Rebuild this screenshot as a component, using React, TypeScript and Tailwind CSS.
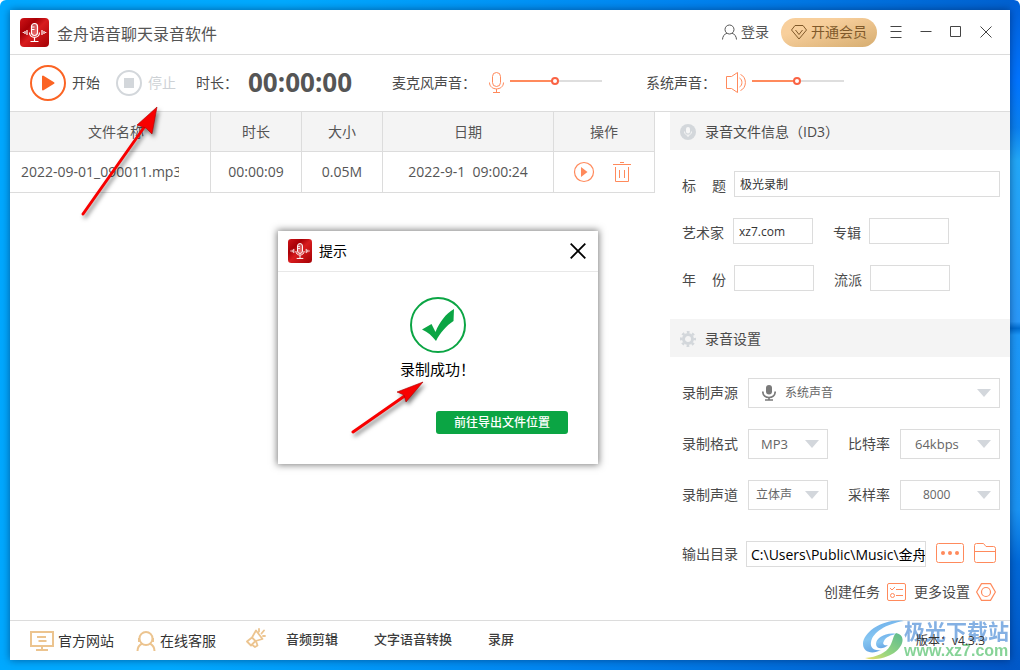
import React from "react";

type IconProps = { className?: string };

const AppLogo: React.FC<IconProps> = ({ className }) => (
  <svg className={className} viewBox="0 0 29 29" fill="none" aria-hidden="true">
    <defs>
      <linearGradient id="logo-red" x1="0" y1="0" x2="1" y2="1">
        <stop offset="0" stopColor="#d01418" />
        <stop offset="0.3" stopColor="#a80006" />
        <stop offset="0.5" stopColor="#d81c1e" />
        <stop offset="1" stopColor="#a40004" />
      </linearGradient>
    </defs>
    <rect width="29" height="29" rx="4" fill="url(#logo-red)" />
    <rect x="11.5" y="5.5" width="6" height="12" rx="3" fill="#fff" fillOpacity="0.3" stroke="#fff" strokeWidth="1.2" />
    <path d="M12 9h2.5M12 11.5h2.5" stroke="#fff" />
    <path
      d="M9.5 14.500c0 6.500 10 6.500 10 0M14.500 19.500v4M10.500 23.500h8M7 12v5M22 12v5M5 13v3M24 13v3M3.300 14v1M25.700 14v1"
      stroke="#fff"
      strokeWidth="1.200"
    />
  </svg>
);

const MicLine: React.FC<IconProps> = ({ className }) => (
  <svg className={className} viewBox="0 0 16 22" fill="none" stroke="#ff8a5c" aria-hidden="true">
    <rect x="3.500" y="0.500" width="8" height="14" rx="4" />
    <path d="M0.500 10.500c0 8.500 14 8.500 14 0M7.500 17v3M4 20.500h7" />
  </svg>
);

const MicSolid: React.FC<IconProps> = ({ className }) => (
  <svg className={className} viewBox="0 0 14 16" aria-hidden="true">
    <rect x="4" y="0" width="6" height="9.500" rx="3" fill="currentColor" />
    <path d="M0.800 6.500c0 8 12.400 8 12.400 0M7 12v3M3 15h8" fill="none" stroke="currentColor" strokeWidth="1.700" />
  </svg>
);

const CaretIcon: React.FC = () => (
  <svg className="pointer-events-none absolute right-[9px] top-[11px] h-2 w-[14px]" viewBox="0 0 14 8" aria-hidden="true">
    <path d="M0 0h14L7 8z" fill="#d3d7dc" />
  </svg>
);

const sliderClass =
  "h-[2px] w-[92px] appearance-none bg-[linear-gradient(to_right,#ff8a5c_49%,#dedede_49%)] outline-none [&::-webkit-slider-thumb]:h-2 [&::-webkit-slider-thumb]:w-2 [&::-webkit-slider-thumb]:appearance-none [&::-webkit-slider-thumb]:rounded-full [&::-webkit-slider-thumb]:border-2 [&::-webkit-slider-thumb]:border-[#fa6344] [&::-webkit-slider-thumb]:bg-white";

const fieldClass = "h-[26px] border border-[#dcdcdc] bg-white px-[5px] text-xs text-[#333] outline-none";

type SelectProps = {
  id: string;
  value: string;
  className: string;
  selectClass: string;
  icon?: React.ReactNode;
};

const SelectBox: React.FC<SelectProps> = ({ id, value, className, selectClass, icon }) => (
  <div className={`relative ${className}`}>
    {icon}
    <select
      id={id}
      className={`h-[30px] w-full appearance-none border border-[#dcdcdc] bg-white text-[#666] outline-none ${selectClass}`}
      defaultValue={value}
    >
      <option>{value}</option>
    </select>
    <CaretIcon />
  </div>
);

const TitleBar: React.FC = () => (
  <header className="flex h-[45px] shrink-0 items-center border-b border-[#dcdcdc] pl-[10px] pr-[9px]">
    <AppLogo className="h-[29px] w-[29px]" />
    <h1 className="ml-2 pt-[3px] text-base text-[#555]">金舟语音聊天录音软件</h1>
    <div className="ml-auto flex items-center">
      <button type="button" className="flex items-center gap-1 text-[#555]">
        <svg className="h-4 w-[15px]" viewBox="0 0 15 16" fill="none" stroke="currentColor" aria-hidden="true">
          <circle cx="7.500" cy="5.500" r="4.500" />
          <path d="M0.500 15.500c0-3 2.200-5.800 4.600-6.400M14.500 15.500c0-3-2.200-5.800-4.600-6.400" />
        </svg>
        登录
      </button>
      <button
        type="button"
        className="ml-3 flex h-[29px] w-24 items-center justify-center gap-1 rounded-full bg-linear-to-br from-[#f8cf9c] from-30% to-[#d6ad70] text-[#80592a]"
      >
        <svg className="h-4 w-4" viewBox="0 0 16 16" fill="none" stroke="currentColor" aria-hidden="true">
          <path d="M4 1.500h8l3.500 4.500L8 15 0.500 6z" />
          <path d="M4.500 6L8 10.500 11.500 6" />
        </svg>
        开通会员
      </button>
      <div className="ml-1 flex text-[#444]">
        <button type="button" aria-label="菜单" className="flex h-[30px] w-[30px] items-center justify-center">
          <svg className="h-3 w-3" viewBox="0 0 12 12" stroke="currentColor" aria-hidden="true">
            <path d="M0.500 0.500h11M0.500 5.500h11M0.500 11.500h11" />
          </svg>
        </button>
        <button type="button" aria-label="最小化" className="flex h-[30px] w-[30px] items-center justify-center">
          <svg className="h-3 w-3" viewBox="0 0 12 12" stroke="currentColor" aria-hidden="true">
            <path d="M0.500 5.500h11" />
          </svg>
        </button>
        <button type="button" aria-label="最大化" className="flex h-[30px] w-[30px] items-center justify-center">
          <svg className="h-3 w-3" viewBox="0 0 12 12" fill="none" stroke="currentColor" aria-hidden="true">
            <path d="M0.500 0.500h10v10h-10z" />
          </svg>
        </button>
        <button type="button" aria-label="关闭" className="flex h-[30px] w-[30px] items-center justify-center">
          <svg className="h-3 w-3" viewBox="0 0 12 12" stroke="currentColor" aria-hidden="true">
            <path d="M0.500 0.500l11 11M11.500 0.500l-11 11" />
          </svg>
        </button>
      </div>
    </div>
  </header>
);

const Toolbar: React.FC = () => (
  <div className="flex h-[57px] shrink-0 items-center border-b border-[#dcdcdc] pl-5 text-[#4a4a4a]">
    <button type="button" className="flex items-center gap-[6px]">
      <svg className="h-9 w-9" viewBox="0 0 36 36" aria-hidden="true">
        <circle cx="18" cy="18" r="17" fill="none" stroke="#fb6424" strokeWidth="2" />
        <path d="M13 11.500v13L23.500 18z" fill="#fb6424" stroke="#fb6424" strokeWidth="2" strokeLinejoin="round" />
      </svg>
      开始
    </button>
    <button type="button" disabled className="ml-4 flex items-center gap-[6px] text-[#cdd1d5]">
      <svg className="h-[26px] w-[26px]" viewBox="0 0 26 26" aria-hidden="true">
        <circle cx="13" cy="13" r="12" fill="none" stroke="#d3d7db" strokeWidth="2" />
        <path d="M8 8h10v10H8z" fill="#d3d7db" />
      </svg>
      停止
    </button>
    <span className="ml-5 w-[52px]">时长：</span>
    <output className="w-[104px] text-[26px] font-bold text-[#555]">00:00:00</output>
    <label htmlFor="mic-volume" className="ml-10 w-[97px]">
      麦克风声音：
    </label>
    <MicLine className="h-[22px] w-4" />
    <input id="mic-volume" type="range" defaultValue={49} className={`ml-[5px] -translate-y-0.5 ${sliderClass}`} />
    <label htmlFor="system-volume" className="ml-11 w-20">
      系统声音：
    </label>
    <svg className="h-[22px] w-5" viewBox="0 0 20 22" fill="none" stroke="#ff8a5c" aria-hidden="true">
      <path d="M0.500 4.500h5l6-4v20l-6-4h-5z" />
      <path d="M13.500 6c3.200 1.500 3.200 7.500 0 9M14.500 2.500c6.500 2.500 6.500 13.500 0 16" />
    </svg>
    <input id="system-volume" type="range" defaultValue={49} className={`ml-[6px] -translate-y-0.5 ${sliderClass}`} />
  </div>
);

const headCell = "h-10 border-b border-r border-[#dcdcdc] font-normal";
const bodyCell = "h-[41px] border-b border-r border-[#dcdcdc] text-center";

const RecordTable: React.FC = () => (
  <table className="w-full table-fixed border-separate border-spacing-0 text-[#555]">
    <colgroup>
      <col />
      <col className="w-[91px]" />
      <col className="w-[81px]" />
      <col className="w-[171px]" />
      <col className="w-[101px]" />
    </colgroup>
    <thead className="bg-[#f4f4f4]">
      <tr>
        <th className={`${headCell} pl-3`}>文件名称</th>
        <th className={headCell}>时长</th>
        <th className={headCell}>大小</th>
        <th className={headCell}>日期</th>
        <th className={headCell}>操作</th>
      </tr>
    </thead>
    <tbody>
      <tr>
        <td className="h-[41px] border-b border-r border-[#dcdcdc] pl-[11px]">
          <div className="w-[158px] overflow-hidden whitespace-nowrap">2022-09-01_090011.mp3</div>
        </td>
        <td className={bodyCell}>00:00:09</td>
        <td className={bodyCell}>0.05M</td>
        <td className={`${bodyCell} whitespace-pre`}>2022-9-1  09:00:24</td>
        <td className={bodyCell}>
          <div className="flex items-center justify-center gap-[18px] pr-1">
            <button type="button" aria-label="播放">
              <svg className="block h-[22px] w-[22px]" viewBox="0 0 22 22" aria-hidden="true">
                <circle cx="11" cy="11" r="9.500" fill="none" stroke="#ff8a5c" strokeWidth="1.200" />
                <path d="M8 6v10l6.500-5z" fill="#ff8a5c" />
              </svg>
            </button>
            <button type="button" aria-label="删除">
              <svg className="block h-[22px] w-[18px]" viewBox="0 0 18 22" fill="none" stroke="#ff8a5c" aria-hidden="true">
                <path d="M7 1.500h4M0 3.500h18M2.500 6v14.500h13V6M6.500 9v8M11.500 9v8" />
              </svg>
            </button>
          </div>
        </td>
      </tr>
    </tbody>
  </table>
);

const SidePanel: React.FC = () => (
  <aside className="w-[340px] shrink-0 text-[#4a4a4a]">
    <section>
      <h2 className="flex h-[38px] items-center gap-[9px] bg-[#f4f4f4] pl-[10px] pt-0.5">
        <svg className="h-4 w-4" viewBox="0 0 16 16" aria-hidden="true">
          <circle cx="8" cy="8" r="8" fill="#d3d7db" />
          <rect x="6" y="3" width="4" height="6.500" rx="2" fill="#f7f7f7" />
          <path d="M4.500 7.500c0 5 7 5 7 0M8 11v2" fill="none" stroke="#f7f7f7" />
        </svg>
        录音文件信息（ID3）
      </h2>
      <div className="flex flex-col gap-[21px] pb-7 pl-3 pr-[10px] pt-[21px]">
        <div className="flex items-center">
          <label htmlFor="tag-title" className="flex w-[52px] gap-4 pt-[3px]">
            <span>标</span>
            <span>题</span>
          </label>
          <input id="tag-title" className={`min-w-0 flex-1 ${fieldClass}`} defaultValue="极光录制" />
        </div>
        <div className="flex items-center">
          <label htmlFor="tag-artist" className="w-[51px] pt-[3px]">
            艺术家
          </label>
          <input id="tag-artist" className={`w-20 ${fieldClass}`} defaultValue="xz7.com" />
          <label htmlFor="tag-album" className="ml-5 w-9 pt-[3px]">
            专辑
          </label>
          <input id="tag-album" className={`w-20 ${fieldClass}`} />
        </div>
        <div className="flex items-center">
          <label htmlFor="tag-year" className="flex w-[52px] gap-4 pt-[3px]">
            <span>年</span>
            <span>份</span>
          </label>
          <input id="tag-year" className={`w-20 ${fieldClass}`} />
          <label htmlFor="tag-genre" className="ml-5 w-9 pt-[3px]">
            流派
          </label>
          <input id="tag-genre" className={`w-20 ${fieldClass}`} />
        </div>
      </div>
    </section>

    <section>
      <h2 className="flex h-[38px] items-center gap-[9px] bg-[#f4f4f4] pl-[10px] pt-0.5">
        <svg className="h-4 w-4" viewBox="0 0 16 16" fill="none" stroke="#d3d7db" aria-hidden="true">
          <circle cx="8" cy="8" r="4.500" strokeWidth="3" />
          <circle cx="8" cy="8" r="6.800" strokeWidth="2.400" strokeDasharray="2.700 2.640" strokeDashoffset="1.350" />
        </svg>
        录音设置
      </h2>
      <div className="flex flex-col gap-[21px] pl-3 pr-[10px] pt-[21px]">
        <div className="flex items-center">
          <label htmlFor="source" className="w-[66px]">
            录制声源
          </label>
          <SelectBox
            id="source"
            value="系统声音"
            className="flex-1"
            selectClass="pl-9 text-xs"
            icon={<MicSolid className="pointer-events-none absolute left-[14px] top-[7px] h-4 w-[14px] text-[#7a7a7a]" />}
          />
        </div>
        <div className="flex items-center">
          <label htmlFor="format" className="w-[66px]">
            录制格式
          </label>
          <SelectBox id="format" value="MP3" className="w-20" selectClass="pl-3 text-[13px]" />
          <label htmlFor="bitrate" className="ml-5 w-[52px]">
            比特率
          </label>
          <SelectBox id="bitrate" value="64kbps" className="flex-1" selectClass="pl-[14px] text-[13px]" />
        </div>
        <div className="flex items-center">
          <label htmlFor="channel" className="w-[66px]">
            录制声道
          </label>
          <SelectBox id="channel" value="立体声" className="w-20" selectClass="pl-[7px] text-xs" />
          <label htmlFor="sample-rate" className="ml-5 w-[52px]">
            采样率
          </label>
          <SelectBox id="sample-rate" value="8000" className="flex-1" selectClass="pl-[22px] text-xs" />
        </div>
      </div>
      <div className="flex items-center pl-3 pr-[14px] pt-[31px]">
        <label htmlFor="output-dir" className="w-16">
          输出目录
        </label>
        <input
          id="output-dir"
          className="h-[26px] min-w-0 flex-1 border border-[#dcdcdc] pl-1 text-sm text-black outline-none"
          defaultValue="C:\Users\Public\Music\金舟语音聊天录音软件"
        />
        <button type="button" aria-label="选择目录" className="ml-[10px] pb-0.5">
          <svg className="block h-5 w-7" viewBox="0 0 28 20" aria-hidden="true">
            <rect x="0.500" y="0.500" width="27" height="19" rx="2" fill="none" stroke="#ff8a5c" />
            <circle cx="7" cy="10" r="2" fill="#ff8a5c" />
            <circle cx="14" cy="10" r="2" fill="#ff8a5c" />
            <circle cx="21" cy="10" r="2" fill="#ff8a5c" />
          </svg>
        </button>
        <button type="button" aria-label="打开文件夹" className="ml-[10px] pb-0.5">
          <svg className="block h-5 w-[22px]" viewBox="0 0 22 20" fill="none" stroke="#ff8a5c" aria-hidden="true">
            <path d="M0.500 17.500v-15q0-2 2-2h7l2.500 3h7.500q2 0 2 2v12q0 2-2 2h-17q-2 0-2-2zM0.500 8.500h21" />
          </svg>
        </button>
      </div>
      <div className="flex items-center justify-end gap-2 pr-[14px] pt-[15px]">
        <button type="button" className="flex items-center gap-[7px]">
          创建任务
          <svg className="h-[18px] w-[19px]" viewBox="0 0 19 18" fill="none" stroke="#ff8a5c" aria-hidden="true">
            <rect x="0.500" y="0.500" width="18" height="17" rx="1.500" />
            <path d="M3 5l2 2 3-3M9 6.500h7M9 12.500h7" />
            <circle cx="5.500" cy="12.500" r="2" />
          </svg>
        </button>
        <button type="button" className="flex items-center gap-[6px]">
          更多设置
          <svg className="h-[18px] w-5" viewBox="0 0 20 18" fill="none" stroke="#ff8a5c" strokeWidth="1.200" aria-hidden="true">
            <path d="M5.500 0.600h9L19.400 9l-4.900 8.400h-9L0.600 9z" strokeLinejoin="round" />
            <circle cx="10" cy="9" r="4.500" />
          </svg>
        </button>
      </div>
    </section>
  </aside>
);

const Footer: React.FC = () => (
  <footer className="flex h-10 shrink-0 items-center border-t border-[#dcdcdc] pl-5 pr-[25px] text-[#333]">
    <a href="#site" className="flex items-center gap-1">
      <svg className="h-5 w-6" viewBox="0 0 24 20" fill="none" stroke="#ecc48f" strokeWidth="2" aria-hidden="true">
        <path d="M1 1h22v14H1zM7 6h9M8.500 10h8M12 15v4M6 19h12" />
      </svg>
      官方网站
    </a>
    <a href="#support" className="ml-[22px] flex items-center gap-1">
      <svg className="h-5 w-5" viewBox="0 0 20 20" fill="none" stroke="#ecc48f" strokeWidth="2" aria-hidden="true">
        <circle cx="10" cy="7.500" r="6.500" />
        <path d="M1.500 20c0-3.500 2-6 4.500-7.300M18.500 20c0-3.500-2-6-4.500-7.300M3 7v4M17 7v4" />
      </svg>
      在线客服
    </a>
    <nav className="ml-[30px] flex items-center pb-0.5 text-[13px] font-medium text-[#3c3c3c]">
      <svg
        className="-mt-1 h-5 w-5"
        viewBox="0 0 20 20"
        fill="none"
        stroke="#ecc48f"
        strokeWidth="1.800"
        strokeLinejoin="round"
        strokeLinecap="round"
        aria-hidden="true"
      >
        <path d="M10 2.500L16.500 11l-7 2L5 17.500 1 13.500 6 9.500zM6 9.500l4 4M7 17.500l2 1.500 2.500-1.500-1-3M13 3.500V1M15.500 5.500l2.500-3M17 8h2" />
      </svg>
      <a href="#audio" className="ml-5">音频剪辑</a>
      <a href="#speech" className="ml-9">文字语音转换</a>
      <a href="#screen" className="ml-9">录屏</a>
    </nav>
    <span className="relative z-10 ml-auto text-xs">版本：v4.3.3</span>
  </footer>
);

const SuccessDialog: React.FC = () => (
  <div
    role="dialog"
    aria-labelledby="dialog-title"
    className="absolute left-[268px] top-[221px] flex w-80 flex-col bg-white pb-[30px] text-black shadow-[0_0_7px_1px_rgba(0,0,0,0.5)]"
  >
    <div className="flex h-[41px] items-center border-b border-[#e8e8e8] pl-[10px] pr-3">
      <AppLogo className="h-6 w-6" />
      <h2 id="dialog-title" className="ml-[7px]">提示</h2>
      <button type="button" aria-label="关闭" className="ml-auto">
        <svg className="block h-4 w-4" viewBox="0 0 16 16" stroke="#000" strokeWidth="1.800" aria-hidden="true">
          <path d="M0.700 0.700l14.600 14.600M15.300 0.700L0.700 15.300" />
        </svg>
      </button>
    </div>
    <svg className="mt-[25px] h-14 w-14 self-center" viewBox="0 0 56 56" aria-hidden="true">
      <circle cx="28" cy="28" r="27" fill="none" stroke="#0ba544" strokeWidth="2" />
      <path d="M12 32.500l9.500-5.500L25.500 35c4-10 10-18 18.500-23l-.5 12C36 29 30 36 26 44c-4-5-8-9-14-11.500z" fill="#0ba544" />
    </svg>
    <p className="mt-1 pl-[122px] text-[15px]/6">录制成功！</p>
    <button
      type="button"
      className="mr-[30px] mt-[30px] h-[23px] w-[132px] self-end rounded-[3px] bg-[#0ba544] text-xs font-medium text-white"
    >
      前往导出文件位置
    </button>
  </div>
);

const Pointers: React.FC = () => (
  <>
    <svg className="pointer-events-none absolute left-[66px] top-[92px] h-[120px] w-[100px] drop-shadow-[2px_3px_2px_rgba(0,0,0,0.5)]" viewBox="0 0 100 120" aria-hidden="true">
      <path d="M7 112L69 24" stroke="#f80000" strokeWidth="3" strokeLinecap="round" />
      <path d="M81 5L76 32L70 26L61 23z" fill="#f80000" stroke="#a00" strokeWidth="0.600" />
    </svg>
    <svg className="pointer-events-none absolute left-[336px] top-[364px] h-[70px] w-[90px] drop-shadow-[2px_3px_2px_rgba(0,0,0,0.5)]" viewBox="0 0 90 70" aria-hidden="true">
      <path d="M7 58L60 21" stroke="#f80000" strokeWidth="3" strokeLinecap="round" />
      <path d="M77 8L60 28L58 21L51 18z" fill="#f80000" stroke="#a00" strokeWidth="0.600" />
    </svg>
  </>
);

const Watermark: React.FC = () => (
  <div className="pointer-events-none absolute bottom-0 right-0 flex items-center pr-px opacity-85">
    <svg className="h-10 w-[42px]" viewBox="0 0 42 40" aria-hidden="true">
      <defs>
        <linearGradient id="swirl" x1="0" y1="0" x2="0.400" y2="1">
          <stop offset="0" stopColor="#4f9be6" />
          <stop offset="0.550" stopColor="#72bdf0" />
          <stop offset="1" stopColor="#4a94de" />
        </linearGradient>
        <linearGradient id="leaf" x1="1" y1="0" x2="0" y2="1">
          <stop offset="0" stopColor="#3fae7c" />
          <stop offset="0.600" stopColor="#86cf6a" />
          <stop offset="1" stopColor="#ecd94a" />
        </linearGradient>
      </defs>
      <path d="M42 1C22-2 1 12 1 24c0 8 9 11 18 6-7 1-11-2-10-8C11 12 24 4 42 1z" fill="url(#swirl)" />
      <path d="M34 14C24 12 14 18 14 24c0 5 7 6 12 1-4 1-6-1-4-4 2-4 7-6 12-7z" fill="url(#swirl)" />
      <path d="M34 13c10 2 8 13-2 20C24 38 12 41 3 38c12-1 21-5 25-12 3-5 3-10 6-13z" fill="url(#leaf)" />
    </svg>
    <div className="flex flex-col">
      <span className="text-[21px]/[22px] font-bold text-[#6fa3df]">极光下载站</span>
      <span className="font-['Liberation_Sans',sans-serif] text-base/[18px] font-bold text-[#72cc86]">www.xz7.com</span>
    </div>
  </div>
);

export default function App() {
  return (
    <div className="flex min-h-screen flex-col overflow-hidden rounded-t-md bg-[linear-gradient(to_bottom,#0060d8_0%,#0074ff_12%,#0a80f0_19%,#22a8f8_24%,#2a98f8_48%,#006cd0_49%,#1c98f8_50%,#1a94f4_76%,#0068d8_84%,#0058c8_100%),linear-gradient(100deg,#00a8ff_0%,#00aaff_25%,#0084f0_60%,#0054c4_100%)] bg-[length:10px_100%,100%_100%] bg-[position:right_top,left_top] bg-no-repeat p-[10px] font-['Open_Sans','Noto_Sans_CJK_SC',sans-serif] text-sm">
      <div className="relative flex flex-1 flex-col bg-white shadow-[0_0_8px_rgba(0,20,60,0.5)]">
        <TitleBar />
        <Toolbar />
        <main className="flex flex-1">
          <div className="min-w-0 flex-1 pr-[15px]">
            <RecordTable />
          </div>
          <SidePanel />
        </main>
        <Footer />
        <Watermark />
        <SuccessDialog />
        <Pointers />
      </div>
    </div>
  );
}
